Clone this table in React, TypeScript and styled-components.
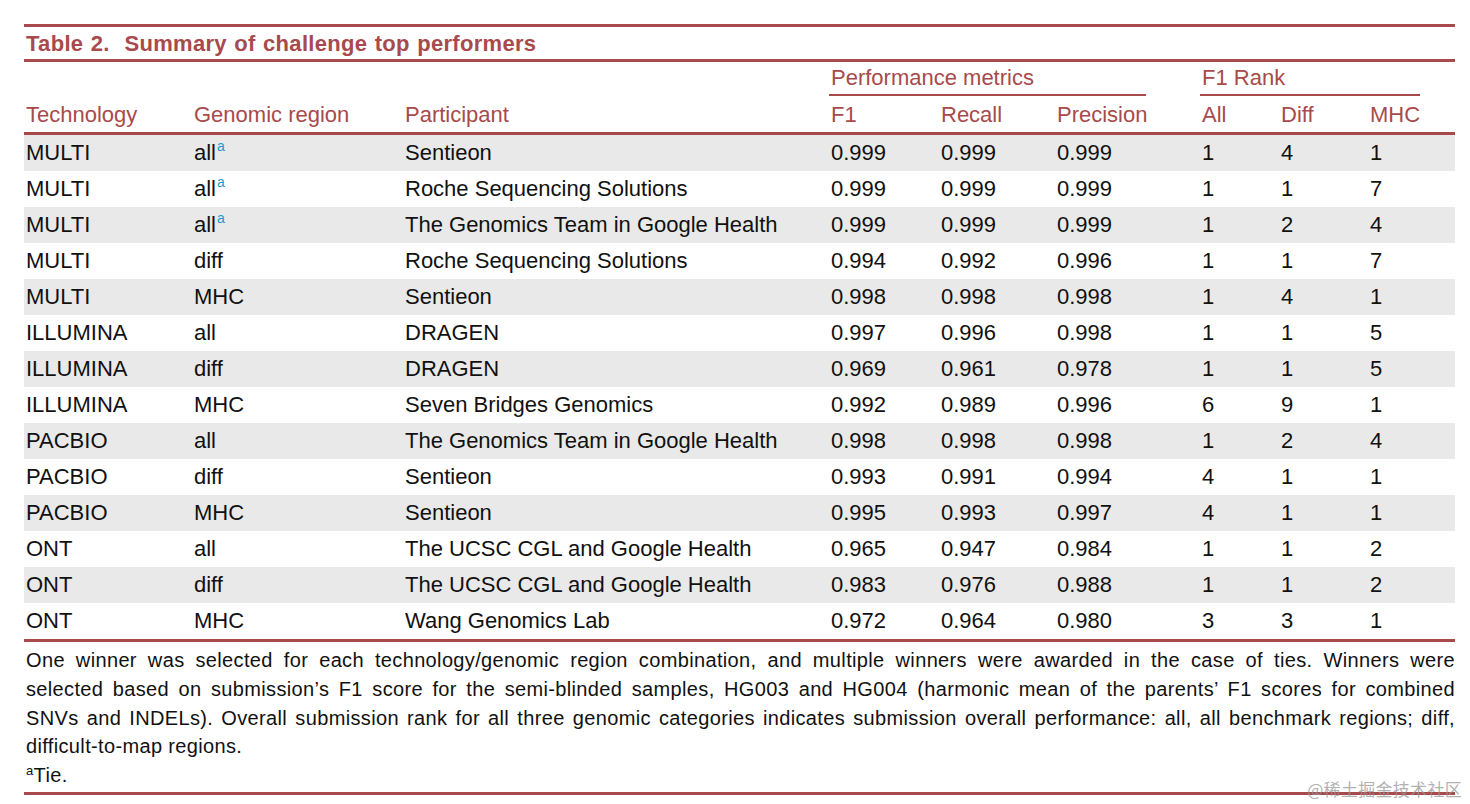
import { FC } from 'react';
import styled, { createGlobalStyle } from 'styled-components';

const RED = '#a84a4c';

const GlobalStyle = createGlobalStyle`
  body {
    margin: 0;
    background: #fff;
    font-family: 'Liberation Sans', Arial, sans-serif;
    color: #111;
  }
`;

const Page = styled.div`
  position: relative;
  width: 1470px;
  height: 804px;
  padding: 24px 15px 0 24px;
  box-sizing: border-box;
`;

const Title = styled.h2`
  margin: 0;
  border-top: 3px solid ${RED};
  border-bottom: 3px solid ${RED};
  height: 32px;
  line-height: 33px;
  padding-left: 2px;
  font-size: 22px;
  font-weight: bold;
  color: ${RED};
  letter-spacing: 0.3px;
  word-spacing: 1px;
`;

const Table = styled.table`
  width: 100%;
  border-collapse: collapse;
  table-layout: fixed;
  font-size: 22px;
`;

const GroupCell = styled.th<{ gap?: number }>`
  padding: 5px ${(p) => p.gap ?? 0}px 0 0;
  height: 28px;
  vertical-align: top;
  text-align: left;
  font-weight: normal;
  color: ${RED};
`;

const GroupLabel = styled.div`
  border-bottom: 2px solid ${RED};
  padding: 0 0 5px 2px;
  line-height: 22px;
`;

const HeadCell = styled.th`
  text-align: left;
  font-weight: normal;
  color: ${RED};
  padding: 1px 0 0 2px;
  height: 35px;
  line-height: 35px;
  border-bottom: 3px solid ${RED};
  white-space: nowrap;
`;

const Row = styled.tr<{ shaded: boolean }>`
  background: ${(p) => (p.shaded ? '#e9e9e9' : '#fff')};
  &:last-child td {
    border-bottom: 3px solid ${RED};
  }
`;

const Cell = styled.td`
  padding: 0 0 0 2px;
  height: 36px;
  line-height: 36px;
  white-space: nowrap;
  color: #111;
`;

const Sup = styled.sup`
  color: #1a9bd1;
  font-size: 14px;
  line-height: 0;
  vertical-align: 9px;
  margin-left: 1px;
`;

const Notes = styled.div`
  padding: 4px 0 2px 2px;
  border-bottom: 3px solid ${RED};
  font-size: 20px;
  line-height: 28.75px;
  color: #111;
`;

const NoteLine = styled.div<{ last?: boolean }>`
  white-space: nowrap;
  text-align: justify;
  text-align-last: ${(p) => (p.last ? 'left' : 'justify')};
  letter-spacing: 0.35px;
`;

const NoteSup = styled.sup`
  font-size: 13px;
  line-height: 0;
  vertical-align: 7px;
`;

const Watermark = styled.div`
  position: absolute;
  right: 8px;
  top: 776px;
  font-family: 'Noto Sans CJK SC', sans-serif;
  font-size: 17px;
  color: rgba(150, 150, 150, 0.75);
  letter-spacing: 0.3px;
`;

type Entry = [string, string, string, string, string, string, string, string, string];

const rows: Entry[] = [
  ['MULTI', 'all*', 'Sentieon', '0.999', '0.999', '0.999', '1', '4', '1'],
  ['MULTI', 'all*', 'Roche Sequencing Solutions', '0.999', '0.999', '0.999', '1', '1', '7'],
  ['MULTI', 'all*', 'The Genomics Team in Google Health', '0.999', '0.999', '0.999', '1', '2', '4'],
  ['MULTI', 'diff', 'Roche Sequencing Solutions', '0.994', '0.992', '0.996', '1', '1', '7'],
  ['MULTI', 'MHC', 'Sentieon', '0.998', '0.998', '0.998', '1', '4', '1'],
  ['ILLUMINA', 'all', 'DRAGEN', '0.997', '0.996', '0.998', '1', '1', '5'],
  ['ILLUMINA', 'diff', 'DRAGEN', '0.969', '0.961', '0.978', '1', '1', '5'],
  ['ILLUMINA', 'MHC', 'Seven Bridges Genomics', '0.992', '0.989', '0.996', '6', '9', '1'],
  ['PACBIO', 'all', 'The Genomics Team in Google Health', '0.998', '0.998', '0.998', '1', '2', '4'],
  ['PACBIO', 'diff', 'Sentieon', '0.993', '0.991', '0.994', '4', '1', '1'],
  ['PACBIO', 'MHC', 'Sentieon', '0.995', '0.993', '0.997', '4', '1', '1'],
  ['ONT', 'all', 'The UCSC CGL and Google Health', '0.965', '0.947', '0.984', '1', '1', '2'],
  ['ONT', 'diff', 'The UCSC CGL and Google Health', '0.983', '0.976', '0.988', '1', '1', '2'],
  ['ONT', 'MHC', 'Wang Genomics Lab', '0.972', '0.964', '0.980', '3', '3', '1'],
];

const widths = [168, 211, 426, 110, 116, 145, 79, 89, 87];
const columns = ['Technology', 'Genomic region', 'Participant', 'F1', 'Recall', 'Precision', 'All', 'Diff', 'MHC'];

const notes = [
  'One winner was selected for each technology/genomic region combination, and multiple winners were awarded in the case of ties. Winners were',
  'selected based on submission\u2019s F1 score for the semi-blinded samples, HG003 and HG004 (harmonic mean of the parents\u2019 F1 scores for combined',
  'SNVs and INDELs). Overall submission rank for all three genomic categories indicates submission overall performance: all, all benchmark regions; diff,',
];

const App: FC = () => {
  return (
    <Page>
      <GlobalStyle />
      <Title>Table 2.&nbsp; Summary of challenge top performers</Title>
      <Table>
        <colgroup>
          {widths.map((w, i) => (
            <col key={i} style={{ width: w }} />
          ))}
        </colgroup>
        <thead>
          <tr>
            <GroupCell colSpan={3} />
            <GroupCell colSpan={3} gap={54}>
              <GroupLabel>Performance metrics</GroupLabel>
            </GroupCell>
            <GroupCell colSpan={3} gap={35}>
              <GroupLabel>F1 Rank</GroupLabel>
            </GroupCell>
          </tr>
          <tr>
            {columns.map((c) => (
              <HeadCell key={c}>{c}</HeadCell>
            ))}
          </tr>
        </thead>
        <tbody>
          {rows.map((r, i) => (
            <Row key={i} shaded={i % 2 === 0}>
              {r.map((v, j) => (
                <Cell key={j}>
                  {v.endsWith('*') ? (
                    <>
                      {v.slice(0, -1)}
                      <Sup>a</Sup>
                    </>
                  ) : (
                    v
                  )}
                </Cell>
              ))}
            </Row>
          ))}
        </tbody>
      </Table>
      <Notes>
        {notes.map((n, i) => (
          <NoteLine key={i}>{n}</NoteLine>
        ))}
        <NoteLine last>difficult-to-map regions.</NoteLine>
        <NoteLine last>
          <NoteSup>a</NoteSup>Tie.
        </NoteLine>
      </Notes>
      <Watermark>@稀土掘金技术社区</Watermark>
    </Page>
  );
};

export default App;
